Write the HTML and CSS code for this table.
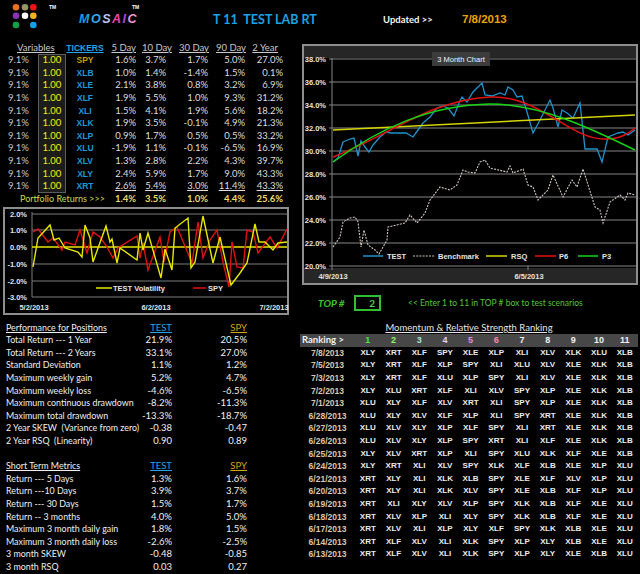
FILE: index.html
```html
<!DOCTYPE html>
<html lang="en">
<head>
<meta charset="utf-8">
<title>Mosaic T 11 Test Lab RT</title>
<link rel="stylesheet" href="styles.css">
</head>
<body>
<div class="page">
  <header class="top">
    <div class="brand">
      <svg class="dots" viewBox="12 3 26 26" width="26" height="26">
        <circle cx="16" cy="7.3" r="3.3" fill="#e8701e"/>
        <circle cx="25" cy="7.3" r="3.3" fill="#9a9260"/>
        <circle cx="33.3" cy="7.3" r="3.3" fill="#ec1414"/>
        <circle cx="16" cy="15.7" r="3.3" fill="#8634b4"/>
        <circle cx="25" cy="15.7" r="3.3" fill="#ffffff"/>
        <circle cx="33.3" cy="15.7" r="3.3" fill="#f2b21e"/>
        <circle cx="16" cy="25" r="3.3" fill="#12a244"/>
        <circle cx="33.3" cy="25" r="3.3" fill="#12a2ea"/>
      </svg>
      <span class="tm tm1">TM</span>
    </div>
    <div class="brand-name">
      <span class="mosaic"><span class="m1">M</span><span class="m2">O</span><span class="m3">S</span><span class="m4">A</span><span class="m5">I</span><span class="m6">C</span></span>
      <span class="tm tm2">TM</span>
    </div>
    <div class="title">T 11&nbsp;&nbsp;TEST LAB RT</div>
    <div class="updated">Updated &gt;&gt;</div>
    <div class="date">7/8/2013</div>
  </header>

  <section class="upper">
    <div class="left-col">
      <table class="vars">
        <colgroup><col class="c1"><col class="c2"><col class="c3"><col class="c4"><col class="c5"><col class="c6"><col class="c7"><col class="c8"></colgroup>
        <tr class="head">
          <td colspan="2" class="h-var"><u>Variables</u></td>
          <td class="h-tk"><u>TICKERS</u></td>
          <td class="h4"><u>5 Day</u></td>
          <td class="h5"><u>10 Day</u></td>
          <td class="h6"><u>30 Day</u></td>
          <td class="h7"><u>90 Day</u></td>
          <td class="h8"><u>2 Year</u></td>
        </tr>
        <tr class="first"><td class="w">9.1%</td><td class="box">1.00</td><td class="tk spy">SPY</td><td class="v1">1.6%</td><td class="v2">3.7%</td><td class="v3">1.7%</td><td class="v4">5.0%</td><td class="v5">27.0%</td></tr>
        <tr><td class="w">9.1%</td><td class="box">1.00</td><td class="tk">XLB</td><td class="v1">1.0%</td><td class="v2">1.4%</td><td class="v3">-1.4%</td><td class="v4">1.5%</td><td class="v5">0.1%</td></tr>
        <tr><td class="w">9.1%</td><td class="box">1.00</td><td class="tk">XLE</td><td class="v1">2.1%</td><td class="v2">3.8%</td><td class="v3">0.8%</td><td class="v4">3.2%</td><td class="v5">6.9%</td></tr>
        <tr><td class="w">9.1%</td><td class="box">1.00</td><td class="tk">XLF</td><td class="v1">1.9%</td><td class="v2">5.5%</td><td class="v3">1.0%</td><td class="v4">9.3%</td><td class="v5">31.2%</td></tr>
        <tr><td class="w">9.1%</td><td class="box">1.00</td><td class="tk">XLI</td><td class="v1">1.5%</td><td class="v2">4.1%</td><td class="v3">1.9%</td><td class="v4">5.6%</td><td class="v5">18.2%</td></tr>
        <tr><td class="w">9.1%</td><td class="box">1.00</td><td class="tk">XLK</td><td class="v1">1.9%</td><td class="v2">3.5%</td><td class="v3">-0.1%</td><td class="v4">4.9%</td><td class="v5">21.3%</td></tr>
        <tr><td class="w">9.1%</td><td class="box">1.00</td><td class="tk">XLP</td><td class="v1">0.9%</td><td class="v2">1.7%</td><td class="v3">0.5%</td><td class="v4">0.5%</td><td class="v5">33.2%</td></tr>
        <tr><td class="w">9.1%</td><td class="box">1.00</td><td class="tk">XLU</td><td class="v1">-1.9%</td><td class="v2">1.1%</td><td class="v3">-0.1%</td><td class="v4">-6.5%</td><td class="v5">16.9%</td></tr>
        <tr><td class="w">9.1%</td><td class="box">1.00</td><td class="tk">XLV</td><td class="v1">1.3%</td><td class="v2">2.8%</td><td class="v3">2.2%</td><td class="v4">4.3%</td><td class="v5">39.7%</td></tr>
        <tr><td class="w">9.1%</td><td class="box">1.00</td><td class="tk">XLY</td><td class="v1">2.4%</td><td class="v2">5.9%</td><td class="v3">1.7%</td><td class="v4">9.0%</td><td class="v5">43.3%</td></tr>
        <tr class="last"><td class="w">9.1%</td><td class="box">1.00</td><td class="tk">XRT</td><td class="v1"><u>2.6%</u></td><td class="v2"><u>5.4%</u></td><td class="v3"><u>3.0%</u></td><td class="v4"><u>11.4%</u></td><td class="v5"><u>43.3%</u></td></tr>
        <tr class="port"><td colspan="3" class="p-label">Portfolio Returns &gt;&gt;&gt;</td><td class="v1">1.4%</td><td class="v2">3.5%</td><td class="v3">1.0%</td><td class="v4">4.4%</td><td class="v5">25.6%</td></tr>
      </table>

      <div class="vol-chart">
        <svg class="chart-svg" viewBox="3 207 286 108" width="286" height="108">
          <rect x="4" y="208" width="284" height="106" fill="#000" stroke="#8e8e8e" stroke-width="2"/>
          <g stroke="#7c7c7c" stroke-width="1">
            <line x1="32" y1="214" x2="287" y2="214"/>
            <line x1="32" y1="230" x2="287" y2="230"/>
            <line x1="32" y1="264" x2="287" y2="264"/>
            <line x1="32" y1="281" x2="287" y2="281"/>
            <line x1="32" y1="297" x2="287" y2="297"/>
            <line x1="32" y1="212" x2="32" y2="297"/>
          </g>
          <line x1="32" y1="247" x2="287" y2="247" stroke="#e8e800" stroke-width="1.5"/>
          <text x="27" y="216.7" text-anchor="end">2.0%</text>
          <text x="27" y="232.7" text-anchor="end">1.0%</text>
          <text x="27" y="249.7" text-anchor="end">0.0%</text>
          <text x="27" y="266.7" text-anchor="end">-1.0%</text>
          <text x="27" y="283.7" text-anchor="end">-2.0%</text>
          <text x="27" y="299.7" text-anchor="end">-3.0%</text>
          <polyline fill="none" stroke="#e01010" stroke-width="1.4" points="33,232 38,229 48,242 53,238 62,250 65,242 75,245 80,230 87,253 93,232 100,237 107,247 113,258 118,248 137,236 140,258 143,243 148,270 160,237 164,262 170,232 177,227 192,263 198,222 203,258 210,240 217,230 223,262 229,287 232,242 237,267 243,268 247,230 253,232 258,253 270,237 277,248 287,229"/>
          <polyline fill="none" stroke="#e6e600" stroke-width="1.4" points="33,267 38,238 50,225 54,240 59,238 65,248 78,252 82,257 85,225 90,238 93,262 106,226 110,242 112,239 117,263 120,248 137,260 140,233 143,250 148,233 161,278 165,249 172,270 175,228 188,218 191,268 195,262 203,216 213,263 220,237 231,285 240,273 247,263 255,224 259,242 265,242 273,250 278,243 287,242"/>
          <line x1="96" y1="288" x2="112" y2="288" stroke="#e6e600" stroke-width="1.5"/>
          <text x="113" y="290.7">TEST Volatility</text>
          <line x1="193" y1="288" x2="206" y2="288" stroke="#e01010" stroke-width="1.5"/>
          <text x="208" y="290.7">SPY</text>
          <text x="34" y="310" text-anchor="middle">5/2/2013</text>
          <text x="156" y="310" text-anchor="middle">6/2/2013</text>
          <text x="274" y="310" text-anchor="middle">7/2/2013</text>
        </svg>
      </div>
    </div>

    <div class="right-col">
      <div class="big-chart">
        <svg class="chart-svg" viewBox="302 44 336 241" width="336" height="241">
          <rect x="303" y="45" width="334" height="239" fill="#262626" stroke="#8e8e8e" stroke-width="2"/>
          <rect x="304" y="58" width="332" height="210" fill="#000"/>
          <g stroke="#858585" stroke-width="1">
            <line x1="329" y1="59" x2="636" y2="59"/>
            <line x1="329" y1="82" x2="636" y2="82"/>
            <line x1="329" y1="105" x2="636" y2="105"/>
            <line x1="329" y1="128" x2="636" y2="128"/>
            <line x1="329" y1="151" x2="636" y2="151"/>
            <line x1="329" y1="174" x2="636" y2="174"/>
            <line x1="329" y1="197" x2="636" y2="197"/>
            <line x1="329" y1="220" x2="636" y2="220"/>
            <line x1="329" y1="243" x2="636" y2="243"/>
            <line x1="329" y1="266" x2="636" y2="266"/>
            <line x1="332" y1="58" x2="332" y2="270"/>
            <line x1="528" y1="266" x2="528" y2="270"/>
          </g>
          <rect x="432" y="52" width="58" height="14" fill="#3c3c3c"/>
          <text class="ttl" x="461" y="61.7" text-anchor="middle">3 Month Chart</text>
          <text x="326" y="61.7" text-anchor="end">38.0%</text>
          <text x="326" y="84.7" text-anchor="end">36.0%</text>
          <text x="326" y="107.7" text-anchor="end">34.0%</text>
          <text x="326" y="130.7" text-anchor="end">32.0%</text>
          <text x="326" y="153.7" text-anchor="end">30.0%</text>
          <text x="326" y="176.7" text-anchor="end">28.0%</text>
          <text x="326" y="199.7" text-anchor="end">26.0%</text>
          <text x="326" y="222.7" text-anchor="end">24.0%</text>
          <text x="326" y="245.7" text-anchor="end">22.0%</text>
          <text x="326" y="268.7" text-anchor="end">20.0%</text>
          <polyline fill="none" stroke="#cfc6bc" stroke-width="1.1" stroke-dasharray="2 1.2" points="333,247 340,237 343,222 350,218 355,217 358,222 361,247 364,230 368,245 375,250 379,254 387,240 388,227 397,225 405,223 410,215 417,223 425,213 430,200 440,187 450,190 457,185 463,170 468,172 475,173 480,162 485,160 490,168 507,172 510,166 513,173 523,169 528,185 533,187 538,200 548,190 553,175 563,197 572,180 577,187 583,169 595,207 600,210 603,223 610,202 620,195 625,200 628,193 635,195"/>
          <polyline fill="none" stroke="#1e92cc" stroke-width="1.3" points="333,162 338,158 343,142 350,139 354,138 358,156 361,141 365,147 369,152 373,145 380,137 386,132 391,133 400,133 406,133 413,137 418,130 423,123 430,117 437,108 443,106 448,108 454,116 459,103 462,97 467,102 473,92 482,83 485,95 492,96 500,93 505,95 508,87 513,90 517,97 522,96 527,112 533,133 540,120 550,100 553,108 558,127 562,110 567,113 573,118 580,103 585,149 597,149 602,162 608,137 618,133 623,132 628,135 635,130"/>
          <line x1="333" y1="130" x2="635" y2="115" stroke="#d4d400" stroke-width="1.5"/>
          <path d="M333,157 C390,135 430,100 490,97 C540,95 570,140 605,139 C620,139 628,134 635,128" fill="none" stroke="#e41010" stroke-width="1.5"/>
          <path d="M333,162 C380,128 430,105 490,104 C540,104 590,128 635,150" fill="none" stroke="#14d414" stroke-width="1.5"/>
          <line x1="363" y1="256" x2="383" y2="256" stroke="#1e92cc" stroke-width="1.5"/>
          <text x="387" y="258.7">TEST</text>
          <line x1="413" y1="256" x2="435" y2="256" stroke="#cfc6bc" stroke-width="1.2" stroke-dasharray="2 1.2"/>
          <text x="438" y="258.7">Benchmark</text>
          <line x1="486" y1="256" x2="507" y2="256" stroke="#d4d400" stroke-width="1.5"/>
          <text x="511" y="258.7">RSQ</text>
          <line x1="535" y1="256" x2="556" y2="256" stroke="#e41010" stroke-width="1.5"/>
          <text x="559" y="258.7">P6</text>
          <line x1="578" y1="256" x2="598" y2="256" stroke="#14d414" stroke-width="1.5"/>
          <text x="602" y="258.7">P3</text>
          <text x="333" y="279" text-anchor="middle">4/9/2013</text>
          <text x="529" y="279" text-anchor="middle">6/5/2013</text>
        </svg>
      </div>
      <div class="top-row">
        <span class="top-label">TOP #</span>
        <span class="top-box">2</span>
        <span class="top-hint">&lt;&lt; Enter 1 to 11 in TOP # box to test scenarios</span>
      </div>
    </div>
  </section>

  <section class="lower">
    <table class="perf">
      <colgroup><col class="pl"><col class="pt"><col class="ps"></colgroup>
      <tr class="head"><td><u>Performance for Positions</u></td><td class="test"><u>TEST</u></td><td class="spy"><u>SPY</u></td></tr>
      <tr><td>Total Return --- 1 Year</td><td>21.9%</td><td>20.5%</td></tr>
      <tr><td>Total Return --- 2 Years</td><td>33.1%</td><td>27.0%</td></tr>
      <tr><td>Standard Deviation</td><td>1.1%</td><td>1.2%</td></tr>
      <tr><td>Maximum weekly gain</td><td>5.2%</td><td>4.7%</td></tr>
      <tr><td>Maximum weekly loss</td><td>-4.6%</td><td>-6.5%</td></tr>
      <tr><td>Maximum continuous drawdown</td><td>-8.2%</td><td>-11.3%</td></tr>
      <tr><td>Maximum total drawdown</td><td>-13.3%</td><td>-18.7%</td></tr>
      <tr><td>2 Year SKEW&nbsp; (Variance from zero)</td><td>-0.38</td><td>-0.47</td></tr>
      <tr><td>2 Year RSQ&nbsp; (Linearity)</td><td>0.90</td><td>0.89</td></tr>
      <tr class="blank"><td></td><td></td><td></td></tr>
      <tr class="head"><td><u>Short Term Metrics</u></td><td class="test"><u>TEST</u></td><td class="spy"><u>SPY</u></td></tr>
      <tr><td>Return --- 5 Days</td><td>1.3%</td><td>1.6%</td></tr>
      <tr><td>Return ---10 Days</td><td>3.9%</td><td>3.7%</td></tr>
      <tr><td>Return --- 30 Days</td><td>1.5%</td><td>1.7%</td></tr>
      <tr><td>Return -- 3 months</td><td>4.0%</td><td>5.0%</td></tr>
      <tr><td>Maximum 3 month daily gain</td><td>1.8%</td><td>1.5%</td></tr>
      <tr><td>Maximum 3 month daily loss</td><td>-2.6%</td><td>-2.5%</td></tr>
      <tr><td>3 month SKEW</td><td>-0.48</td><td>-0.85</td></tr>
      <tr><td>3 month RSQ</td><td>0.03</td><td>0.27</td></tr>
    </table>

    <div class="mom">
      <div class="mom-title"><u>Momentum &amp; Relative Strength Ranking</u></div>
      <table class="rank">
        <colgroup><col class="dc"><col class="rc"><col class="rc"><col class="rc"><col class="rc"><col class="rc"><col class="rc"><col class="rc"><col class="rc"><col class="rc"><col class="rc"><col class="rc"></colgroup>
        <tr class="hdr"><td class="rk">Ranking &gt;</td><td class="n1">1</td><td class="n2">2</td><td class="n3">3</td><td class="n4">4</td><td class="n5">5</td><td class="n6">6</td><td>7</td><td>8</td><td>9</td><td>10</td><td>11</td></tr>
        <tr><td class="d">7/8/2013</td><td>XLY</td><td>XRT</td><td>XLF</td><td>SPY</td><td>XLE</td><td>XLP</td><td>XLI</td><td>XLV</td><td>XLK</td><td>XLU</td><td>XLB</td></tr>
        <tr><td class="d">7/5/2013</td><td>XLY</td><td>XRT</td><td>XLF</td><td>XLP</td><td>SPY</td><td>XLI</td><td>XLU</td><td>XLV</td><td>XLE</td><td>XLK</td><td>XLB</td></tr>
        <tr><td class="d">7/3/2013</td><td>XLY</td><td>XRT</td><td>XLF</td><td>XLU</td><td>XLP</td><td>SPY</td><td>XLI</td><td>XLV</td><td>XLE</td><td>XLK</td><td>XLB</td></tr>
        <tr><td class="d">7/2/2013</td><td>XLY</td><td>XLU</td><td>XRT</td><td>XLF</td><td>XLI</td><td>XLV</td><td>SPY</td><td>XLP</td><td>XLE</td><td>XLK</td><td>XLB</td></tr>
        <tr><td class="d">7/1/2013</td><td>XLU</td><td>XLY</td><td>XLF</td><td>XLV</td><td>XRT</td><td>XLI</td><td>SPY</td><td>XLP</td><td>XLE</td><td>XLK</td><td>XLB</td></tr>
        <tr><td class="d">6/28/2013</td><td>XLU</td><td>XLY</td><td>XLV</td><td>XLF</td><td>XLP</td><td>XLI</td><td>SPY</td><td>XRT</td><td>XLE</td><td>XLK</td><td>XLB</td></tr>
        <tr><td class="d">6/27/2013</td><td>XLU</td><td>XLV</td><td>XLY</td><td>XLP</td><td>XLF</td><td>SPY</td><td>XLI</td><td>XRT</td><td>XLE</td><td>XLK</td><td>XLB</td></tr>
        <tr><td class="d">6/26/2013</td><td>XLU</td><td>XLV</td><td>XLY</td><td>XLP</td><td>SPY</td><td>XRT</td><td>XLI</td><td>XLF</td><td>XLE</td><td>XLK</td><td>XLB</td></tr>
        <tr><td class="d">6/25/2013</td><td>XLY</td><td>XLV</td><td>XRT</td><td>XLP</td><td>XLI</td><td>SPY</td><td>XLU</td><td>XLK</td><td>XLF</td><td>XLE</td><td>XLB</td></tr>
        <tr><td class="d">6/24/2013</td><td>XLY</td><td>XRT</td><td>XLI</td><td>XLV</td><td>SPY</td><td>XLK</td><td>XLF</td><td>XLB</td><td>XLE</td><td>XLP</td><td>XLU</td></tr>
        <tr><td class="d">6/21/2013</td><td>XRT</td><td>XLY</td><td>XLI</td><td>XLK</td><td>XLB</td><td>SPY</td><td>XLE</td><td>XLF</td><td>XLV</td><td>XLP</td><td>XLU</td></tr>
        <tr><td class="d">6/20/2013</td><td>XRT</td><td>XLY</td><td>XLI</td><td>XLK</td><td>XLV</td><td>SPY</td><td>XLE</td><td>XLB</td><td>XLF</td><td>XLP</td><td>XLU</td></tr>
        <tr><td class="d">6/19/2013</td><td>XRT</td><td>XLI</td><td>XLY</td><td>XLV</td><td>XLP</td><td>SPY</td><td>XLK</td><td>XLB</td><td>XLF</td><td>XLE</td><td>XLU</td></tr>
        <tr><td class="d">6/18/2013</td><td>XRT</td><td>XLV</td><td>XLP</td><td>XLI</td><td>XLY</td><td>SPY</td><td>XLK</td><td>XLB</td><td>XLF</td><td>XLE</td><td>XLU</td></tr>
        <tr><td class="d">6/17/2013</td><td>XRT</td><td>XLV</td><td>XLI</td><td>XLP</td><td>XLY</td><td>XLF</td><td>SPY</td><td>XLK</td><td>XLB</td><td>XLE</td><td>XLU</td></tr>
        <tr><td class="d">6/14/2013</td><td>XRT</td><td>XLF</td><td>XLV</td><td>XLI</td><td>XLK</td><td>SPY</td><td>XLP</td><td>XLY</td><td>XLB</td><td>XLE</td><td>XLU</td></tr>
        <tr><td class="d">6/13/2013</td><td>XRT</td><td>XLF</td><td>XLV</td><td>XLI</td><td>XLK</td><td>SPY</td><td>XLP</td><td>XLY</td><td>XLE</td><td>XLB</td><td>XLU</td></tr>
      </table>
    </div>
  </section>
</div>
</body>
</html>
```

FILE: styles.css
```css
* { box-sizing: border-box; }
html, body { margin: 0; padding: 0; background: #000; }
body {
  width: 640px;
  height: 574px;
  overflow: hidden;
  font-family: Lato, "Liberation Sans", sans-serif;
  color: #ececec;
}
.page { width: 640px; height: 574px; overflow: hidden; background: #000; }

/* ---------- header ---------- */
.top {
  height: 41.7px;
  padding-bottom: 3px;
  display: grid;
  grid-template-columns: 79px 134px 170px 79px 1fr;
  align-items: center;
}
.brand, .brand-name { display: flex; align-items: center; height: 100%; }
.dots { align-self: flex-start; margin: 3px 0 0 12px; flex: none; }
.tm {
  align-self: flex-start;
  margin-top: 5px;
  font-family: "Liberation Sans", sans-serif;
  font-weight: bold;
  font-size: 5px;
  line-height: 5px;
  color: #fff;
}
.tm1 { margin-left: 11px; }
.tm2 { margin-left: -6px; }
.mosaic {
  font-family: "Liberation Sans", sans-serif;
  font-weight: bold;
  font-style: italic;
  font-size: 12.5px;
  letter-spacing: 1.5px;
  line-height: 14px;
}
.m1 { color: #1a9ee2; }
.m2 { color: #34aaf0; }
.m3 { color: #b8c2f8; }
.m4 { color: #f044a4; }
.m5 { color: #a848e4; }
.m6 { color: #f294d2; }
.title {
  font-family: Lato, sans-serif;
  font-weight: bold;
  font-size: 12.5px;
  color: #1ba2e2;
  white-space: nowrap;
}
.updated {
  font-family: Lato, sans-serif;
  font-weight: bold;
  font-size: 9.5px;
  color: #f4f4f4;
  white-space: nowrap;
}
.date {
  font-family: "Liberation Sans", sans-serif;
  font-weight: bold;
  font-size: 11.5px;
  color: #eaa400;
}

/* ---------- upper section ---------- */
.upper {
  height: 280px;
  display: grid;
  grid-template-columns: 300px 340px;
}
table { border-collapse: separate; border-spacing: 0; table-layout: fixed; }
td { padding: 0; white-space: nowrap; }

.vars { width: 290px; font-size: 9.5px; }
.vars col.c1 { width: 38px; }
.vars col.c2 { width: 28px; }
.vars col.c3 { width: 38px; }
.vars col.c4 { width: 36px; }
.vars col.c5 { width: 36px; }
.vars col.c6 { width: 36px; }
.vars col.c7 { width: 38px; }
.vars col.c8 { width: 40px; }
.vars td { height: 12.6px; line-height: 12.6px; text-align: right; color: #dedede; }
.vars .head td { color: #c8c8c8; }
.vars .h-var { text-align: left; padding-left: 17px; color: #f0f0f0; }
.vars .head td.h-tk { text-align: center; color: #22a4e6; font-weight: bold; font-size: 8.5px; font-family: "Liberation Sans", sans-serif; }
.vars .h4 { padding-right: 4px; }
.vars .h5 { padding-right: 4px; }
.vars .h6 { padding-right: 3px; }
.vars .h7 { padding-right: 4px; }
.vars .h8 { padding-right: 12px; }
.vars .w { padding-right: 9px; color: #c6c6c6; }
.vars .box {
  text-align: center;
  color: #eeee10;
  background: #1c1c1c;
  box-shadow: inset 1px 0 #5c5c5c, inset -1px 0 #5c5c5c;
}
.vars .first .box { box-shadow: inset 1px 0 #5c5c5c, inset -1px 0 #5c5c5c, inset 0 1px #5c5c5c; }
.vars .last .box { box-shadow: inset 1px 0 #5c5c5c, inset -1px 0 #5c5c5c, inset 0 -1px #5c5c5c; }
.vars .tk {
  text-align: center;
  font-family: "Liberation Sans", sans-serif;
  font-weight: bold;
  font-size: 8.5px;
  color: #1c9ad8;
}
.vars .tk.spy { color: #caa000; }
.vars .v1 { padding-right: 4px; }
.vars .v2 { padding-right: 10px; }
.vars .v3 { padding-right: 4px; }
.vars .v4 { padding-right: 5px; }
.vars .v5 { padding-right: 7px; }
.vars .port td { color: #ecdc68; font-weight: bold; }
.vars .port .p-label { text-align: left; padding-left: 20px; color: #c8dc58; font-weight: normal; font-size: 9px; }

.vol-chart { margin: 1.5px 0 0 3px; width: 286px; height: 108px; }
.chart-svg { display: block; }
.chart-svg text {
  font-family: "Liberation Sans", sans-serif;
  font-weight: bold;
  font-size: 7.5px;
  fill: #e4e4e4;
}
.chart-svg text.ttl { font-weight: normal; fill: #f4f4f4; }

.big-chart { margin: 2.3px 0 0 2px; width: 336px; height: 241px; }
.top-row {
  margin-top: 10px;
  height: 16px;
  display: flex;
  align-items: center;
  padding-left: 18px;
  white-space: nowrap;
}
.top-label {
  flex: none;
  width: 23px;
  font-weight: bold;
  font-style: italic;
  font-size: 10px;
  color: #3cc82a;
  white-space: nowrap;
}
.top-box {
  flex: none;
  margin-left: 13px;
  width: 27px;
  height: 16px;
  border: 2px solid #30c030;
  text-align: right;
  padding-right: 4px;
  font-weight: bold;
  font-size: 10px;
  line-height: 12px;
  color: #50d040;
}
.top-hint {
  margin-left: 27px;
  font-size: 8.5px;
  color: #52c832;
  white-space: nowrap;
}

/* ---------- lower section ---------- */
.lower {
  display: grid;
  grid-template-columns: 300px 340px;
}
.perf { width: 248px; font-size: 9.5px; }
.perf col.pl { width: 140px; }
.perf col.pt { width: 33px; }
.perf col.ps { width: 75px; }
.perf td { height: 12.6px; line-height: 12.6px; color: #f0f0f0; text-align: right; padding-right: 1px; }
.perf td:first-child { text-align: left; padding-left: 6px; font-size: 8.9px; }
.perf .head .test { color: #22a6e8; }
.perf .head .spy { color: #d8a410; }

.mom-title {
  height: 12.6px;
  line-height: 12.6px;
  text-align: center;
  width: 338px;
  font-size: 9.5px;
  color: #e4e4e4;
}
.rank { width: 337.7px; }
.rank col.dc { width: 55px; }
.rank col.rc { width: 25.7px; }
.rank td {
  height: 12.6px;
  line-height: 12.6px;
  text-align: center;
  font-family: "Liberation Sans", sans-serif;
  font-weight: bold;
  font-size: 8px;
  color: #ececec;
}
.rank .hdr td { background: #474747; font-size: 9px; color: #f0f0f0; }
.rank .hdr td.rk { text-align: left; padding-left: 2px; font-family: Lato, sans-serif; font-size: 9.5px; }
.rank .hdr .n1 { color: #3ee83e; }
.rank .hdr .n2 { color: #8cf864; }
.rank .hdr .n3 { color: #a4e8cc; }
.rank .hdr .n4 { color: #dcd2ff; }
.rank .hdr .n5 { color: #f084e0; }
.rank .hdr .n6 { color: #ff84a4; }
.rank td.d { font-size: 8.5px; color: #dcc6aa; }
```
